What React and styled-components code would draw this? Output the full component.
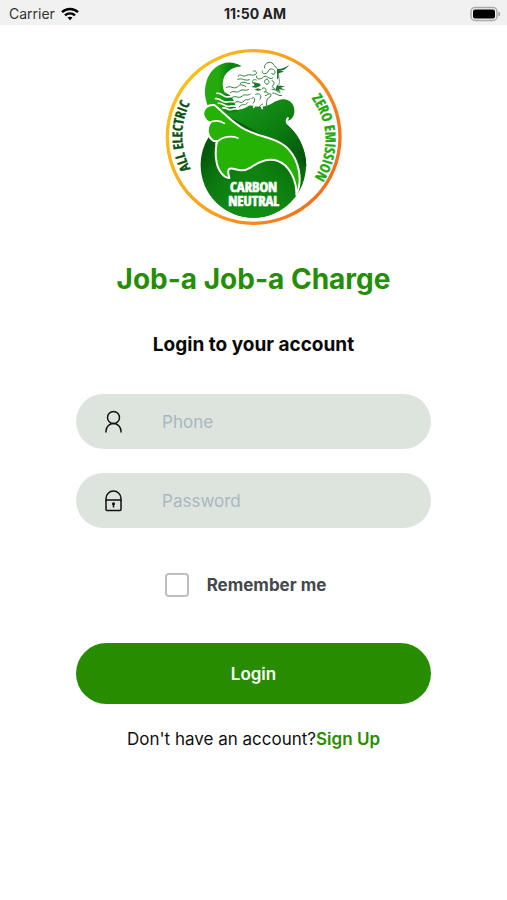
import React from "react";
import styled, { createGlobalStyle } from "styled-components";

const GlobalStyle = createGlobalStyle`
  *, *::before, *::after { box-sizing: border-box; }
  body {
    margin: 0;
    background: #fff;
    color: #101010;
    font-family: Inter, "Liberation Sans", sans-serif;
  }
`;

const Page = styled.div`
  min-height: 100vh;
  display: flex;
  flex-direction: column;
`;

const StatusBar = styled.header`
  display: grid;
  grid-template-columns: 1fr auto 1fr;
  align-items: center;
  height: 25px;
  padding: 2px 6px 0 9px;
  background: #f1f1f1;
  font-size: 14px;
  line-height: 20px;
`;

const Carrier = styled.div`
  display: flex;
  align-items: center;
  gap: 6px;
  color: #333;
`;

const Clock = styled.time`
  color: #222;
  font-size: 14px;
  font-weight: 700;
`;

const BatterySlot = styled.div`
  display: flex;
  justify-content: flex-end;
`;

const Main = styled.main`
  display: flex;
  flex-direction: column;
  align-items: center;
  padding-top: 19px;
`;

const LogoArt = styled.svg`
  display: block;
  width: 186px;
  height: 186px;
`;

const LogoText = styled.text`
  font-family: "Open Sans Condensed", "Liberation Sans Narrow", "DejaVu Sans Condensed", sans-serif;
  font-weight: 700;
  font-size: ${(p) => p.$size}px;
`;

const Title = styled.h1`
  margin: 29px 0 0;
  color: #258d06;
  font-size: 28px;
  line-height: 40px;
  font-weight: 700;
`;

const Subtitle = styled.h2`
  margin: 31px 0 0;
  color: #080808;
  font-size: 19px;
  line-height: 30px;
  font-weight: 700;
`;

const Form = styled.form`
  display: flex;
  flex-direction: column;
  width: 70%;
  margin-top: 34px;
`;

const Field = styled.label`
  display: flex;
  align-items: center;
  gap: 37px;
  height: 55px;
  margin-bottom: 24px;
  padding: 0 28px 0 25px;
  border-radius: 28px;
  background: #dde4de;
`;

const FieldIcon = styled.svg`
  flex: none;
  width: 24px;
  height: 24px;
  fill: none;
  stroke: #111;
  stroke-width: 1.5;
`;

const TextInput = styled.input`
  flex: 1;
  min-width: 0;
  height: 40px;
  padding: 0;
  border: 0;
  outline: 0;
  background: transparent;
  color: #111;
  font: 400 17px/24px Inter, "Liberation Sans", sans-serif;

  &::placeholder {
    color: #a9b7be;
    opacity: 1;
  }
`;

const Remember = styled.label`
  display: flex;
  align-items: center;
  justify-content: center;
  gap: 18px;
  margin: 21px 0 46px;
  padding-right: 16px;
  color: #43484c;
  font-size: 17px;
  line-height: 24px;
  font-weight: 700;
`;

const Checkbox = styled.input`
  appearance: none;
  width: 24px;
  height: 24px;
  margin: 0;
  border: 2px solid #bfbfbf;
  border-radius: 4px;
  background: #fff;

  &:checked {
    border-color: #288c00;
    background: #288c00;
  }
`;

const LoginButton = styled.button`
  height: 61px;
  border: 0;
  border-radius: 31px;
  background: #288c00;
  color: #fff;
  font: 600 17px/24px Inter, "Liberation Sans", sans-serif;
  cursor: pointer;
`;

const SignUpLine = styled.p`
  margin: 23px 0 0;
  font-size: 17px;
  line-height: 24px;
`;

const SignUpLink = styled.a`
  color: #288c00;
  font-weight: 600;
  text-decoration: none;
`;

function WifiIcon() {
  return (
    <svg width="18" height="14" viewBox="0 0 18 14" fill="none" stroke="#000" strokeWidth="2.4" aria-hidden="true">
      <path d="M1 5.200C5.400.9 12.600.9 17 5.200" />
      <path d="M4 8.400c2.800-2.700 7.200-2.700 10 0" />
      <path d="M6.500 10.600c1.400-1.300 3.600-1.300 5 0L9 13.300z" fill="#000" stroke="none" />
    </svg>
  );
}

function BatteryIcon() {
  return (
    <svg width="31" height="16" viewBox="0 0 31 16" aria-label="Battery full">
      <rect x="1" y="1.5" width="26" height="13" rx="4" fill="#f1f1f1" stroke="#aaa" strokeWidth="1.5" />
      <rect x="3" y="3.5" width="22" height="9" rx="2" fill="#000" />
      <path d="M28.500 5.500c2.200.8 2.200 4.200 0 5z" fill="#999" />
    </svg>
  );
}

function Logo() {
  return (
    <LogoArt viewBox="0 0 558 558" role="img" aria-label="Carbon neutral, all electric, zero emission">
      <defs>
        <linearGradient id="ring" x1="0" y1="0.2" x2="1" y2="0.7">
          <stop offset="0" stopColor="#fcc419" />
          <stop offset="0.5" stopColor="#f9a01f" />
          <stop offset="1" stopColor="#f66a1c" />
        </linearGradient>
        <radialGradient id="globe" cx="0.5" cy="0.55" r="0.55">
          <stop offset="0" stopColor="#107f10" />
          <stop offset="0.6" stopColor="#08700c" />
          <stop offset="1" stopColor="#03510a" />
        </radialGradient>
        <linearGradient id="globeFoot" x1="0" y1="0" x2="0" y2="1">
          <stop offset="0.45" stopColor="#129015" stopOpacity="0" />
          <stop offset="1" stopColor="#129015" />
        </linearGradient>
        <linearGradient id="body" x1="0.2" y1="0" x2="1" y2="0.9">
          <stop offset="0" stopColor="#189818" />
          <stop offset="0.55" stopColor="#0b7c10" />
          <stop offset="1" stopColor="#03510a" />
        </linearGradient>
        <linearGradient id="horn" x1="0" y1="0" x2="1" y2="0">
          <stop offset="0.35" stopColor="#24aa0c" />
          <stop offset="0.65" stopColor="#0e8314" />
        </linearGradient>
        <path id="leftArc" d="M89 375A212 212 0 0 1 104 150" />
        <path id="rightArc" d="M451 163A206 206 0 0 1 445 422" />
      </defs>
      <circle cx="278" cy="279" r="259" fill="#fff" stroke="url(#ring)" strokeWidth="10" />
      <circle cx="277" cy="363" r="158" fill="url(#globe)" />
      <circle cx="277" cy="363" r="158" fill="url(#globeFoot)" />
      <path d="M180 206C205 198 215 204 228 198C240 192 250 196 262 186C275 182 285 190 300 188C325 190 340 168 365 166C388 165 402 183 400 205C398 220 389 232 378 229C384 226 386 221 381 219C373 222 372 235 379 245C410 270 438 320 436 370C425 340 390 300 330 285Z" fill="url(#body)" />
      <path d="M242 67C198 39 150 66 136 113C128 143 133 165 140 185L180 211L232 204C222 190 222 165 205 152C200 150 195 148 191 145C176 112 191 71 242 67Z" fill="url(#horn)" />
      <path d="M160 183C132 181 121 204 130 221C133 229 139 234 147 236C135 256 141 278 153 287C160 293 166 292 168 291C165 312 161 325 166 350C170 382 191 403 205 402C204 394 198 383 204 375C220 367 235 391 270 370C305 345 340 336 372 364C396 387 408 423 406 452C427 407 412 350 386 320C357 282 302 282 253 257C213 237 185 202 160 183Z" fill="#26b204" stroke="#fff" strokeWidth="6" strokeLinejoin="round" />
      <g fill="none" stroke="#fff" strokeWidth="5" strokeLinecap="round">
        <path d="M145 236C158 228 178 229 190 238" />
        <path d="M165 300C174 281 204 272 231 282" />
        <path d="M168 148C184 146 184 158 198 159C211 157 222 160 233 151" />
        <path d="M164 164C178 161 184 177 198 174C212 170 220 178 231 169" />
        <path d="M172 178C188 176 191 190 205 187C221 181 230 193 241 184" />
        <path d="M185 192C199 190 202 201 215 196C228 190 237 201 251 187" />
        <path d="M278 190L286 178M304 194L299 180" />
      </g>
      <g fill="none" stroke="#2f7f3a" strokeWidth="3" strokeLinecap="round" strokeLinejoin="round">
        <path d="M196 131C208 122 217 137 229 129C239 117 247 124 254 128" />
        <path d="M208 146C219 136 226 151 237 140C246 133 252 143 262 137" />
        <path d="M214 160C226 153 231 166 244 156C252 148 259 158 268 150" />
        <path d="M222 176C231 165 237 183 249 171C255 163 261 172 267 164" />
        <path d="M235 189C243 175 250 189 260 176" />
        <path d="M232 97C234 86 242 98 253 96C267 86 275 100 286 89C288 82 281 78 276 82" />
        <path d="M230 106C244 100 252 113 265 107M238 118C250 109 256 120 266 119" />
        <path d="M304 81C302 93 319 91 322 81C326 69 347 76 341 89C338 93 333 91 332 88" />
        <path d="M311 72C307 61 323 50 333 57C341 62 340 69 348 73" />
        <path d="M287 96C283 106 299 109 308 98C321 92 321 109 335 102M286 108C277 104 272 110 275 117" />
        <path d="M318 105C307 108 309 118 318 121C329 117 323 109 318 105M333 110C342 112 341 122 333 127L340 134" />
        <path d="M304 133C312 128 321 137 310 144C325 142 325 153 313 155M284 151C295 145 305 155 297 166" />
        <path d="M272 164C280 153 286 170 276 178M323 151C332 143 333 159 323 161C313 169 320 182 314 192" />
        <path d="M305 180C292 184 286 204 305 208C320 207 320 191 310 192C303 194 305 200 309 200" />
        <path d="M333 136C344 134 346 143 357 146M335 147C343 145 349 156 362 155" />
      </g>
      <g fill="#20752c">
        <path d="M275 114L297 119L299 125L285 131L271 129L281 124Z" />
        <path d="M280 138L290 133L303 137L292 140Z" />
        <path d="M348 75C361 76 375 70 384 62C380 72 368 79 355 81L369 81C361 87 353 86 350 91C354 96 354 101 348 107Z" />
        <path d="M348 123C355 127 364 124 372 127L359 131L374 139L354 136L358 143L343 137Z" />
      </g>
      <path d="M354 77C348 94 360 108 353 124" fill="none" stroke="#20752c" strokeWidth="2" />
      <LogoText $size={44} textAnchor="middle" fill="#fff" stroke="#fff" strokeWidth="2">
        <tspan x="278" y="444">CARBON</tspan>
        <tspan x="278" y="485">NEUTRAL</tspan>
      </LogoText>
      <LogoText $size={41} fill="#07520c" stroke="#07520c">
        <textPath href="#leftArc">ALL ELECTRIC</textPath>
      </LogoText>
      <LogoText $size={42} fill="#20a80c" stroke="#20a80c">
        <textPath href="#rightArc">ZERO EMISSION</textPath>
      </LogoText>
    </LogoArt>
  );
}

export default function App() {
  return (
    <Page>
      <GlobalStyle />
      <StatusBar>
        <Carrier>
          Carrier
          <WifiIcon />
        </Carrier>
        <Clock>11:50 AM</Clock>
        <BatterySlot>
          <BatteryIcon />
        </BatterySlot>
      </StatusBar>
      <Main>
        <Logo />
        <Title>Job-a Job-a Charge</Title>
        <Subtitle>Login to your account</Subtitle>
        <Form onSubmit={(e) => e.preventDefault()}>
          <Field htmlFor="phone">
            <FieldIcon viewBox="0 0 24 24" aria-hidden="true">
              <circle cx="12.5" cy="7.5" r="6" />
              <path d="M5 22.500v-1.500a7.500 7.500 0 0 1 15 0v1.500" />
            </FieldIcon>
            <TextInput id="phone" type="tel" placeholder="Phone" aria-label="Phone" />
          </Field>
          <Field htmlFor="password">
            <FieldIcon viewBox="0 0 24 24" aria-hidden="true">
              <rect x="5" y="11" width="15" height="10.5" rx="1" />
              <path d="M5 12V9.500a7.500 7.500 0 0 1 15 0V12" />
              <path d="M12.500 14.500v4" />
              <circle cx="12.5" cy="14.8" r="0.8" fill="#111" />
            </FieldIcon>
            <TextInput id="password" type="password" placeholder="Password" aria-label="Password" />
          </Field>
          <Remember htmlFor="remember">
            <Checkbox id="remember" type="checkbox" />
            Remember me
          </Remember>
          <LoginButton type="submit">Login</LoginButton>
        </Form>
        <SignUpLine>
          Don't have an account?<SignUpLink href="#signup">Sign Up</SignUpLink>
        </SignUpLine>
      </Main>
    </Page>
  );
}
